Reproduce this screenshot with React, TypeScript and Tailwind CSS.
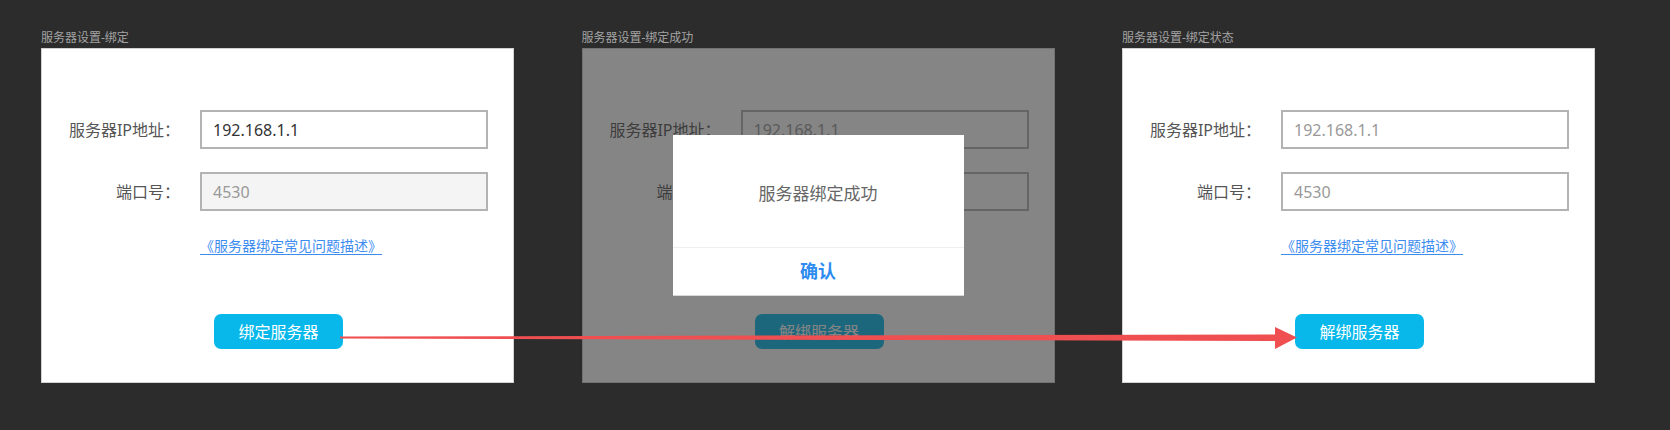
import React from "react";

const font = { fontFamily: '"Noto Sans", "Noto Sans CJK SC", sans-serif' };

function Form({
  ipDark,
  portBg,
  button,
}: {
  ipDark: boolean;
  portBg: string;
  button: string;
}) {
  return (
    <div className="flex flex-col pt-[61px]">
      <div className="flex items-center">
        <div className="w-[138px] text-right text-[16px] leading-[20px] text-[#555]">服务器IP地址：</div>
        <div className="ml-[20px] flex h-[39px] w-[288px] items-center border-2 border-[#b3b3b3] bg-white pl-[11px]">
          <span className={ipDark ? "text-[16px] text-[#333]" : "text-[16px] text-[#999]"}>192.168.1.1</span>
        </div>
      </div>
      <div className="mt-[23px] flex items-center">
        <div className="w-[138px] text-right text-[16px] leading-[20px] text-[#555]">端口号：</div>
        <div className={"ml-[20px] flex h-[39px] w-[288px] items-center border-2 border-[#b3b3b3] pl-[11px] " + portBg}>
          <span className="text-[16px] text-[#999]">4530</span>
        </div>
      </div>
      <div className="ml-[158px] mt-[22px] h-[20px]">
        <span className="text-[14px] leading-[20px] text-[#3d8cf0] underline underline-offset-[3px]">《服务器绑定常见问题描述》</span>
      </div>
      <div className="ml-[172px] mt-[61px]">
        <div className="flex h-[35px] w-[129px] items-center justify-center rounded-[7px] bg-[#08b8ea] text-[16px] text-white">
          {button}
        </div>
      </div>
    </div>
  );
}

function Column({ title, children }: { title: string; children: React.ReactNode }) {
  return (
    <div className="flex flex-col">
      <div className="h-[17px] text-[12px] leading-[14px] text-[#a3a3a3]">{title}</div>
      <div className="relative h-[335px] w-[473px] border border-[#d2d2d2] bg-white">{children}</div>
    </div>
  );
}

export default function App() {
  return (
    <div className="relative h-[430px] w-[1670px] overflow-hidden bg-[#2c2c2c]" style={font}>
      <div className="flex gap-[67.5px] pl-[41px] pt-[31px]">
        <Column title="服务器设置-绑定">
          <Form ipDark portBg="bg-[#f4f4f4]" button="绑定服务器" />
        </Column>
        <Column title="服务器设置-绑定成功">
          <Form ipDark={false} portBg="bg-white" button="解绑服务器" />
          <div className="absolute -inset-px bg-[rgba(44,44,44,0.58)]" />
          <div className="absolute left-[90px] top-[86px] flex h-[161px] w-[291px] flex-col border-b border-[#d8d8d8] bg-white">
            <div className="flex h-[112px] items-center justify-center pt-[6px] text-[17px] text-[#666]">服务器绑定成功</div>
            <div className="h-px bg-[#eeeeee]" />
            <div className="flex flex-1 items-center justify-center text-[18px] font-bold text-[#2d8cf0]">确认</div>
          </div>
        </Column>
        <Column title="服务器设置-绑定状态">
          <Form ipDark={false} portBg="bg-white" button="解绑服务器" />
        </Column>
      </div>
      <svg className="pointer-events-none absolute left-0 top-0" width="1670" height="430" viewBox="0 0 1670 430">
        <polygon
          points="340,336.5 1275,334.5 1275,327 1297,337.5 1275,349 1275,341 340,338.5"
          fill="#f04f51"
        />
      </svg>
    </div>
  );
}
